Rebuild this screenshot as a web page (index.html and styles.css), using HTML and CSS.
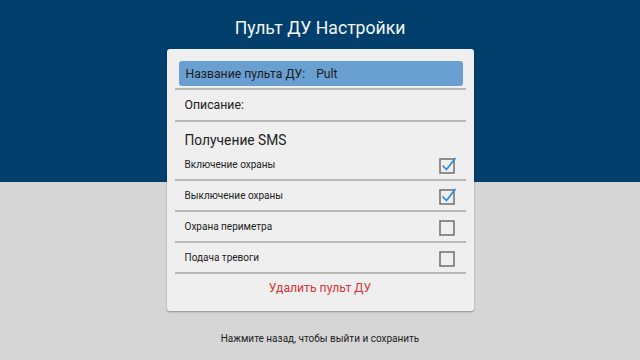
FILE: index.html
```html
<!DOCTYPE html>
<html lang="ru">
<head>
<meta charset="utf-8">
<title>Пульт ДУ Настройки</title>
<link rel="stylesheet" href="styles.css">
</head>
<body>
<h1 class="title">Пульт ДУ Настройки</h1>
<div class="card">
  <div class="field"><span class="field-label">Название пульта ДУ:</span><span class="field-value">Pult</span></div>
  <div class="row row-desc">Описание:</div>
  <div class="section">
    <div class="section-title">Получение SMS</div>
    <div class="item item-first">
      <span>Включение охраны</span>
      <svg class="cb" width="18" height="18" viewBox="0 0 18 18"><rect x="1" y="3" width="14" height="14" fill="none" stroke="#6f6f6f" stroke-width="1.5"/><path d="M3.5 9.5 L7.5 13.5 L16.5 2" fill="none" stroke="#2f8ad8" stroke-width="1.7"/></svg>
    </div>
  </div>
  <div class="row item">
    <span>Выключение охраны</span>
    <svg class="cb" width="18" height="18" viewBox="0 0 18 18"><rect x="1" y="3" width="14" height="14" fill="none" stroke="#6f6f6f" stroke-width="1.5"/><path d="M3.5 9.5 L7.5 13.5 L16.5 2" fill="none" stroke="#2f8ad8" stroke-width="1.7"/></svg>
  </div>
  <div class="row item">
    <span>Охрана периметра</span>
    <svg class="cb" width="18" height="18" viewBox="0 0 18 18"><rect x="1" y="3" width="14" height="14" fill="none" stroke="#6f6f6f" stroke-width="1.5"/></svg>
  </div>
  <div class="row item">
    <span>Подача тревоги</span>
    <svg class="cb" width="18" height="18" viewBox="0 0 18 18"><rect x="1" y="3" width="14" height="14" fill="none" stroke="#6f6f6f" stroke-width="1.5"/></svg>
  </div>
  <div class="row delete">Удалить пульт ДУ</div>
</div>
<p class="hint">Нажмите назад, чтобы выйти и сохранить</p>
</body>
</html>
```
FILE: styles.css
```css
html, body {
  margin: 0;
  padding: 0;
}
body {
  width: 640px;
  height: 360px;
  overflow: hidden;
  font-family: Roboto, "Noto Sans", "DejaVu Sans", sans-serif;
  background: linear-gradient(to bottom, #023f6c 0, #023f6c 182px, #d6d6d6 182px, #d6d6d6 100%);
  color: #222;
}
.title {
  margin: 0;
  padding-top: 16px;
  font-size: 17.6px;
  line-height: 24px;
  font-weight: 400;
  color: #f4f6f8;
  text-align: center;
}
.card {
  width: 291px;
  margin: 9px auto 0;
  padding: 12px 8px 9px 8px;
  background: #efefef;
  border-radius: 3px;
  box-shadow: 0 1px 2px rgba(0, 0, 0, 0.35);
}
.field {
  height: 25px;
  margin: 0 3px 2px 4px;
  background: #6a9fd1;
  border-radius: 3px;
  display: flex;
  align-items: center;
  padding-left: 7px;
  font-size: 12.2px;
  color: #1c1c1c;
}
.field-value {
  margin-left: 11px;
}
.row {
  border-top: 2px solid #b9b9b9;
}
.row-desc {
  height: 30px;
  display: flex;
  align-items: center;
  padding-left: 10px;
  font-size: 12.3px;
}
.section {
  border-top: 2px solid #b9b9b9;
  padding-top: 8px;
}
.section-title {
  padding-left: 10px;
  font-size: 13.8px;
  line-height: 20px;
}
.item {
  height: 29px;
  display: flex;
  align-items: center;
  justify-content: space-between;
  padding-left: 10px;
  padding-right: 9px;
  font-size: 10px;
}
.cb {
  display: block;
}
.delete {
  height: 28px;
  display: flex;
  align-items: center;
  justify-content: center;
  font-size: 12.2px;
  color: #d2353a;
}
.hint {
  margin: 20px 0 0;
  font-size: 10px;
  line-height: 16px;
  text-align: center;
  color: #1e1e1e;
}
```
